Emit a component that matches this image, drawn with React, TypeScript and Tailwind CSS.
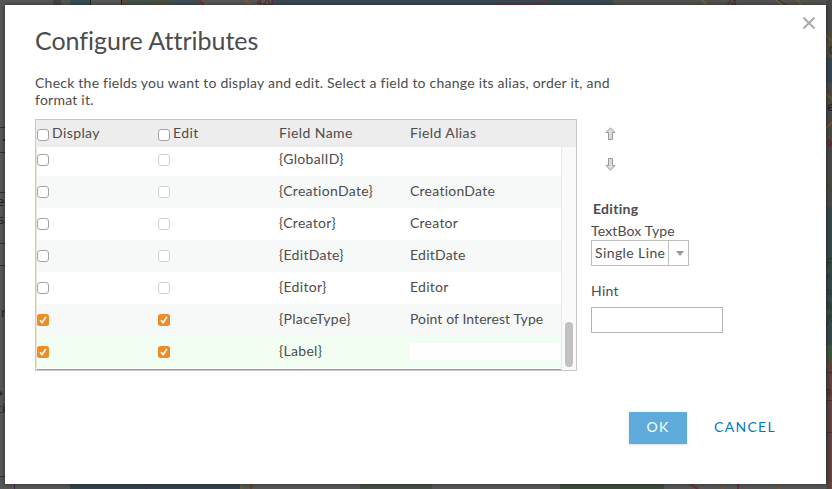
import React from "react";

type Row = { name: string; alias: string; on?: boolean; selected?: boolean };

const rows: Row[] = [
  { name: "{GlobalID}", alias: "" },
  { name: "{CreationDate}", alias: "CreationDate" },
  { name: "{Creator}", alias: "Creator" },
  { name: "{EditDate}", alias: "EditDate" },
  { name: "{Editor}", alias: "Editor" },
  { name: "{PlaceType}", alias: "Point of Interest Type", on: true },
  { name: "{Label}", alias: "", on: true, selected: true },
];

function Box({ on, faint }: { on?: boolean; faint?: boolean }) {
  if (on) {
    return (
      <span className="block size-3 shrink-0 rounded-[2.5px] bg-[#ed8d28]">
        <svg viewBox="0 0 12 12" className="block size-3">
          <path d="M3 6.300 5.100 8.600 8.900 2.900" fill="none" stroke="#fff" strokeWidth="1.700" />
        </svg>
      </span>
    );
  }
  return (
    <span
      className={
        "block size-3 shrink-0 rounded-[3px] border bg-white " +
        (faint ? "border-[#d0d0d0]" : "border-[#a3a3a3]")
      }
    />
  );
}

function Arrow({ down }: { down?: boolean }) {
  return (
    <svg viewBox="0 0 11 13" className={"block h-[13px] w-[11px] " + (down ? "rotate-180" : "")}>
      <path d="M5.5.8 10 5.5H7.5V12.5H3.5V5.5H1Z" fill="#dcdcdc" stroke="#999" />
    </svg>
  );
}

function MapBackdrop() {
  return (
    <svg viewBox="0 0 832 489" className="absolute inset-0 h-[489px] w-[832px]">
      <rect width="832" height="489" fill="#585858" />
      <rect x="53" width="8" height="5" fill="#454545" />
      <rect x="70" width="20" height="5" fill="#3a4c55" />
      <path d="M90.500 0V5M121.500 0V5" stroke="#222" />
      <rect x="122" width="74" height="5" fill="#46534a" />
      <path d="M122 0 128 3 122 5ZM156 5 160 1 163 5Z" fill="#6b4a20" />
      <rect x="176" width="25" height="5" fill="#405057" />
      <path d="M199 0 204 5" stroke="#7a3030" strokeWidth="2" />
      <path d="M245 0 251 5" stroke="#806030" strokeWidth="2" />
      <rect x="272" width="341" height="5" fill="#3b4a51" />
      <path d="M496 4.500H535L548 0" fill="none" stroke="#6b3038" strokeWidth="1.500" />
      <rect x="613" width="219" height="5" fill="#555351" />
      <path d="M702 0 707 5M776 0 783 5M797 0 802 5" stroke="#7b6438" strokeWidth="1.500" />
      <path d="M778 0 786 5" stroke="#333" />
      <rect x="70" y="484" width="170" height="5" fill="#35444c" />
      <path d="M14.500 484V489M146.500 486V489" stroke="#412b48" />
      <path d="M241 484V489" stroke="#66612f" strokeWidth="2" />
      <path d="M251 484V489" stroke="#77382f" strokeWidth="2" />
      <rect x="360" y="484" width="72" height="5" fill="#455046" />
      <rect x="560" y="484" width="104" height="5" fill="#3d4c3d" />
      <path d="M690 484 698 489M738 484V489" stroke="#722b38" strokeWidth="2" />
      <path d="M717 484 723 489M779 484V489" stroke="#79582a" strokeWidth="2" />
      <rect x="826" width="6" height="489" fill="#484847" />
      <path d="M826 35 832 41M826 94 832 99M826 129 832 122" stroke="#735628" strokeWidth="1.500" />
      <rect x="826" y="41" width="6" height="16" fill="#514b40" />
      <rect x="826" y="58" width="6" height="25" fill="#35474d" />
      <path d="M826 182 832 191M826 206 832 218" stroke="#344e36" strokeWidth="1.500" />
      <rect x="826" y="207" width="6" height="138" fill="#39474a" />
      <rect x="826" y="345" width="6" height="14" fill="#3e543d" />
      <path d="M832 359 829 365 831 382V489" fill="none" stroke="#733f36" strokeWidth="2" />
      <path d="M826 372.500H832M826 400.500H832M826 432.500H832" stroke="#353535" />
      <path d="M0 127.500H5M0 152.500H5M0 192.500H5M0 243.500H5M0 265.500H5M0 393.500H3M0 476.500H5" stroke="#303030" />
      <path d="M2 139H5V142Z" fill="#262626" />
      <g fill="#202020" fontSize="13" fontFamily="Open Sans, sans-serif">
        <text x="-3" y="206">e</text>
        <text x="-2" y="224">s</text>
        <text x="1" y="317">r</text>
        <text x="-6" y="397">o</text>
        <text x="-3" y="413">ti</text>
        <text x="829" y="54" fontSize="10">0</text>
        <text x="827" y="111">e</text>
      </g>
      <g fill="#5b1720" fontSize="9" fontFamily="Open Sans, sans-serif">
        <text x="257" y="5">420</text>
        <text x="726" y="6">24</text>
        <text x="827" y="147">97</text>
        <text x="826" y="396">94</text>
      </g>
      <g fill="#1e3d22" fontSize="11" fontStyle="italic" fontFamily="Open Sans, sans-serif">
        <text x="826" y="266">Fo</text>
        <text x="826" y="280">ro</text>
        <text x="826" y="295">lo</text>
        <text x="826" y="309">lo</text>
        <text x="827" y="323">fe</text>
      </g>
    </svg>
  );
}

export default function App() {
  return (
    <div className="relative h-[489px] w-[832px] overflow-hidden font-['Lato','Liberation_Sans',sans-serif] text-[14px] tracking-[0.3px] text-[#4c4c4c]">
      <MapBackdrop />
      <main className="relative mt-[5px] ml-[5px] h-[479px] w-[821px] bg-white pl-[30px] shadow-[0_0_5px_rgba(0,0,0,0.5)]">
        <header className="flex h-[69px] justify-between pt-[11px] pr-[11px]">
          <h1 className="pt-2 text-[25px] leading-8 tracking-[-0.01px] whitespace-nowrap">Configure Attributes</h1>
          <svg viewBox="0 0 12 12" className="mt-px size-3">
            <path d="M.5.500 11.500 11.500M11.500.500.500 11.500" stroke="#aaa" strokeWidth="2" />
          </svg>
        </header>
        <p className="h-[45px] w-[600px] leading-[17px] tracking-[0.235px] whitespace-nowrap">
          Check the fields you want to display and edit. Select a field to change its alias, order it, and
          <br />
          format it.
        </p>
        <div className="flex">
          <section className="h-[252px] w-[542px] border border-[#c8c8c8]">
            <div className="flex h-[27px] items-center bg-[#ededed] tracking-[0.4px]">
              <div className="flex w-[121px] items-center gap-[3px] pl-px">
                <span className="pt-[3px]"><Box /></span>
                <span className="pb-0.5">Display</span>
              </div>
              <div className="flex w-[122px] items-center gap-[3px] pl-px">
                <span className="pt-[3px]"><Box /></span>
                <span className="pb-0.5">Edit</span>
              </div>
              <div className="w-[131px] pb-0.5">Field Name</div>
              <div className="pb-0.5">Field Alias</div>
            </div>
            <div className="flex h-[223px] border-l border-[#ebe7d5]">
              <div className="w-[524px] border-b border-[#999]">
                {rows.map((r, i) => (
                  <div
                    key={r.name}
                    className={
                      "flex items-center " +
                      (i === 0 ? "h-[29px] pb-1 " : "h-8 ") +
                      (r.selected ? "bg-[#f3fef3]" : i % 2 ? "bg-[#f7f9f8]" : "bg-white")
                    }
                  >
                    <div className="w-[121px]"><Box on={r.on} /></div>
                    <div className="w-[121px]"><Box on={r.on} faint /></div>
                    <div className="w-[131px] pb-[3px]">{r.name}</div>
                    {r.selected ? (
                      <div className="mb-px h-[17px] w-[150px] bg-white" />
                    ) : (
                      <div className={"pb-[3px] " + (r.on ? "tracking-[0.08px]" : "tracking-[0.25px]")}>{r.alias}</div>
                    )}
                  </div>
                ))}
              </div>
              <div className="flex flex-1 items-end justify-center border-l border-[#e8e8e8] bg-[#fafafa] pb-[3px]">
                <div className="h-[45px] w-2 rounded-full bg-[#c1c1c1]" />
              </div>
            </div>
          </section>
          <aside className="ml-[14px] pt-2">
            <div className="flex flex-col gap-[18px] pl-[14px]"><Arrow /><Arrow down /></div>
            <h2 className="mt-7 pl-0.5 leading-5 font-bold">Editing</h2>
            <div className="mt-px h-5 leading-[21px] tracking-[0.15px]">TextBox Type</div>
            <div className="flex h-[26px] w-[98px] border border-[#bfbfbf]">
              <div className="w-[77px] border-r border-[#bfbfbf] pl-[3px] leading-6 tracking-[0.4px] whitespace-nowrap">Single Line</div>
              <div className="flex flex-1 items-center justify-center pt-px pl-0.5">
                <span className="size-0 border-x-4 border-t-[5px] border-x-transparent border-t-[#999]" />
              </div>
            </div>
            <div className="mt-[15px] leading-5">Hint</div>
            <div className="mt-[6px] h-[26px] w-[132px] border border-[#b5b5b5]" />
          </aside>
        </div>
        <footer className="mt-[41px] flex pl-[594px] leading-[30px] tracking-[1.3px]">
          <button className="h-8 w-[58px] bg-[#5eabdc] pb-0.5 text-white shadow-sm">OK</button>
          <button className="ml-[27px] h-8 pb-0.5 text-[#0079c1]">CANCEL</button>
        </footer>
      </main>
    </div>
  );
}
